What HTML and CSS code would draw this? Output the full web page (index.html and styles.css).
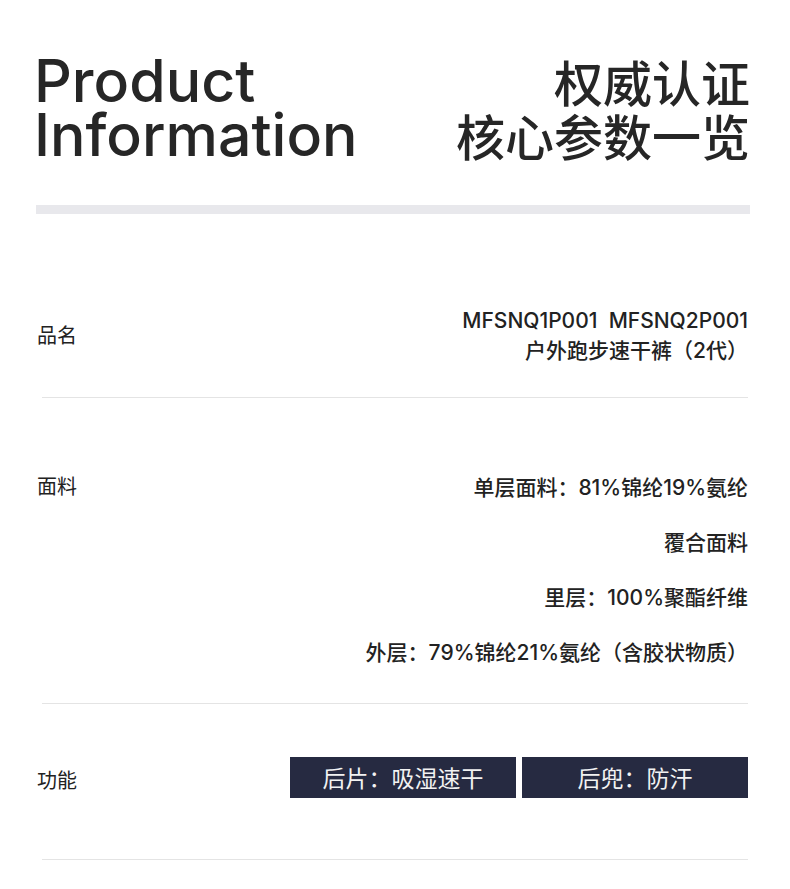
FILE: index.html
```html
<!DOCTYPE html>
<html lang="zh-CN">
<head>
    <meta charset="UTF-8">
    <meta name="viewport" content="width=device-width, initial-scale=1.0">
    <title>Product Information - 核心参数一览</title>
    <link rel="stylesheet" href="styles.css">
</head>
<body>

<div class="page">
    <header class="head">
        <h1 class="title-en">Product<br>Information</h1>
        <h2 class="title-cn">权威认证<br>核心参数一览</h2>
    </header>
    <div class="head-bar"></div>

    <div class="row row-name">
        <div class="row-label">品名</div>
        <div class="row-value">
            <div class="line">MFSNQ1P001&nbsp; MFSNQ2P001</div>
            <div class="line">户外跑步速干裤（2代）</div>
        </div>
    </div>

    <div class="row row-fabric">
        <div class="row-label">面料</div>
        <div class="row-value">
            <div class="line">单层面料：81%锦纶19%氨纶</div>
            <div class="line">覆合面料</div>
            <div class="line">里层：100%聚酯纤维</div>
            <div class="line">外层：79%锦纶21%氨纶（含胶状物质）</div>
        </div>
    </div>

    <div class="row row-func">
        <div class="row-label">功能</div>
        <div class="tags">
            <span class="tag">后片：吸湿速干</span>
            <span class="tag">后兜：防汗</span>
        </div>
    </div>
</div>

</body>
</html>
```

FILE: styles.css
```css
body {
    margin: 0;
    padding: 0;
    background-color: #ffffff;
    color: #222222;
    font-family: Inter, "Noto Sans CJK SC", sans-serif;
}
.page {
    padding: 54px 40px 40px 36px;
}
.head {
    display: flex;
    justify-content: space-between;
    align-items: flex-start;
}
.title-en {
    margin: 0;
    margin-left: -2px;
    font-size: 59px;
    line-height: 54px;
    font-weight: 500;
    color: #262626;
}
.title-cn {
    margin: 0;
    font-family: "Noto Sans CJK SC", sans-serif;
    font-size: 49px;
    line-height: 54px;
    font-weight: 500;
    text-align: right;
    color: #262626;
}
.head-bar {
    height: 9px;
    margin-top: 43px;
    background-color: #e8e8ec;
}
.row {
    display: flex;
    justify-content: space-between;
    margin: 0 2px 0 6px;
    border-bottom: 1px solid #e4e4e4;
}
.row-label {
    margin-left: -5px;
    font-size: 20px;
    line-height: 30px;
}
.row-value {
    text-align: right;
    font-size: 21px;
    font-weight: 500;
}
.row-name {
    align-items: center;
    padding: 92px 0 31px;
}
.row-name .line {
    line-height: 30px;
}
.row-fabric {
    align-items: flex-start;
    padding: 62px 0 23px;
}
.row-fabric .row-label {
    line-height: 55px;
}
.row-fabric .line {
    line-height: 55px;
}
.row-func {
    align-items: center;
    padding: 53px 0 61px;
}
.row-func .row-label {
    margin-top: 6px;
}
.tags {
    display: flex;
    gap: 6px;
}
.tag {
    width: 226px;
    height: 41px;
    line-height: 41px;
    text-align: center;
    background-color: #262a41;
    color: #f2f2f2;
    font-family: "Noto Sans CJK SC", sans-serif;
    font-size: 23px;
}
```
